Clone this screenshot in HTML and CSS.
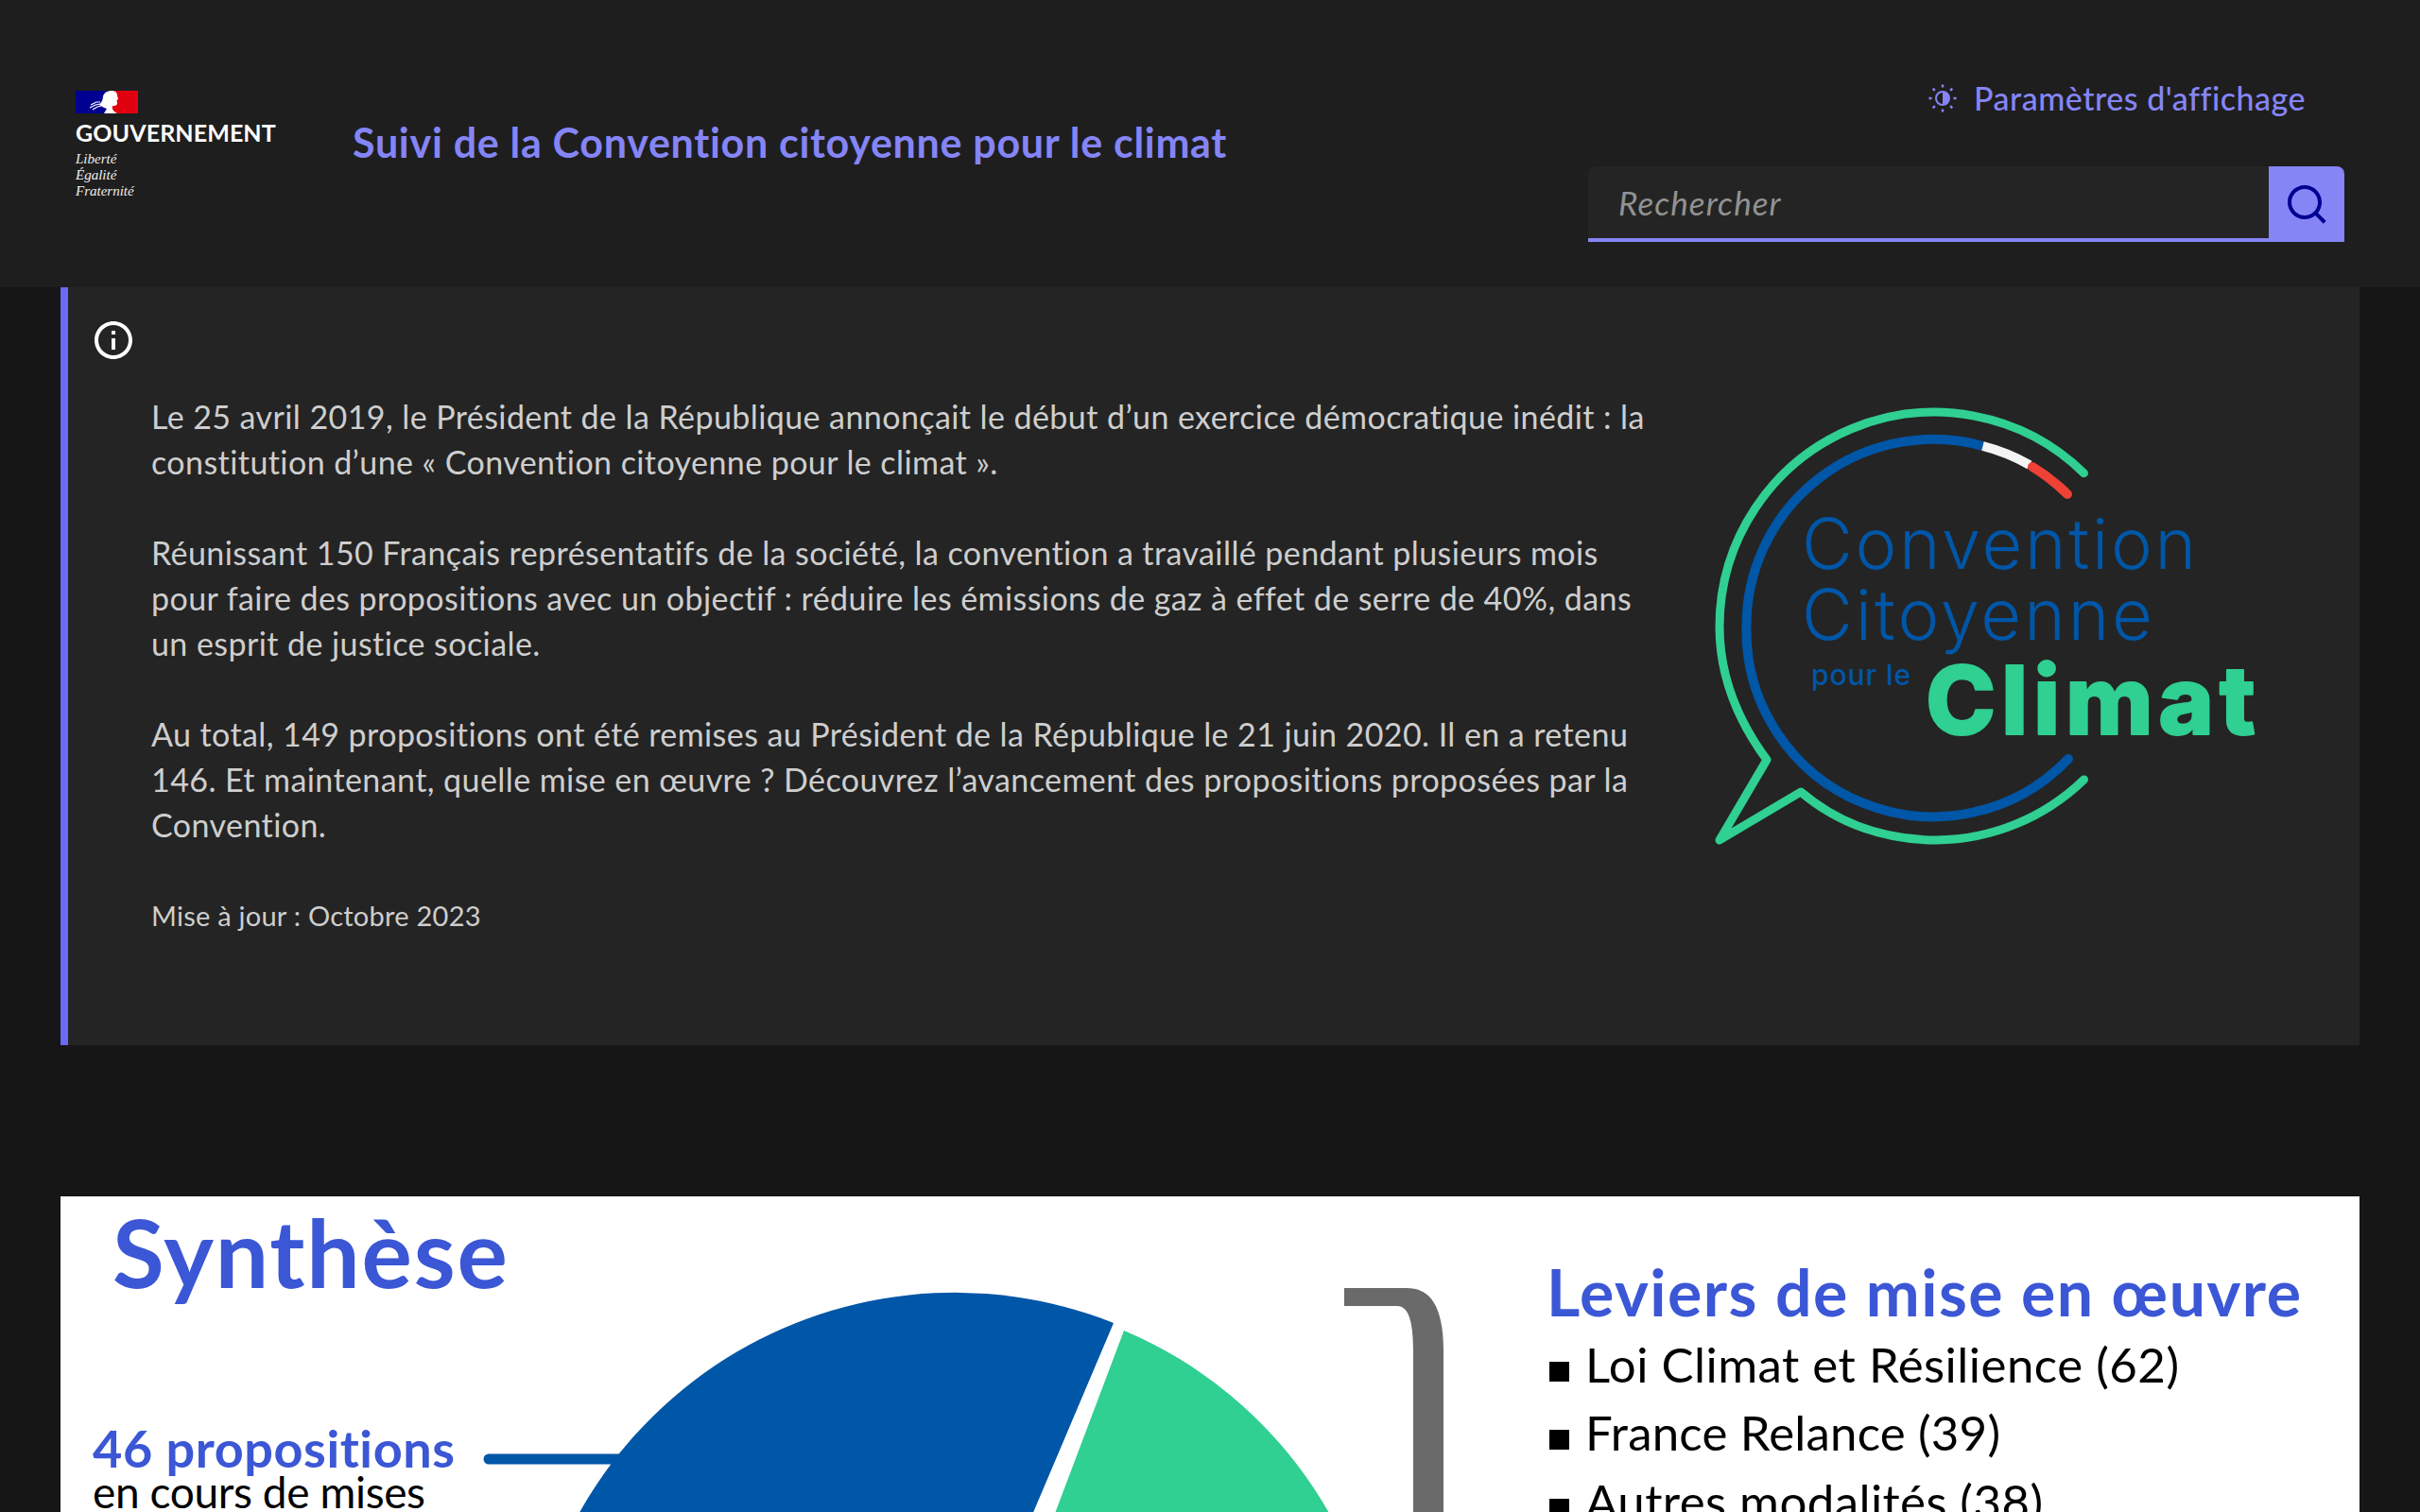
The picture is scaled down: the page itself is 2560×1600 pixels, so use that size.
FILE: index.html
```html
<!DOCTYPE html>
<html lang="fr">
<head>
<meta charset="utf-8">
<title>Suivi de la Convention citoyenne pour le climat</title>
<link rel="stylesheet" href="styles.css">
</head>
<body>
<header class="header">
  <div class="brand">
    <svg class="flag" viewBox="0 0 66 24" width="66" height="24" aria-hidden="true">
      <rect width="36" height="24" fill="#000091"/>
      <rect x="36" width="30" height="24" fill="#e1000f"/>
      <path d="M30 24L33 19C30 18 28 17 25 15C28 12 29 8 29 6C30 2 34 0 38 0C42 0 44 2 44 5L45 9 43.500 10 44 13C44 16 41 16 39 16C38 19 40 22 44 24Z" fill="#fff"/>
      <path d="M15 18L21 15 26 14M16 15L22 12 26 12M18 20L23 17 27 16" stroke="#fff" stroke-width="1.100" fill="none"/>
    </svg>
    <p class="brand-name">GOUVERNEMENT</p>
    <p class="brand-motto">Liberté<br>Égalité<br>Fraternité</p>
  </div>
  <p class="service-title">Suivi de la Convention citoyenne pour le climat</p>
  <div class="tools">
    <a class="settings">
      <svg class="sun" viewBox="0 0 30 30" width="30" height="30" aria-hidden="true">
        <circle cx="15" cy="15" r="7" fill="none" stroke="#8585f6" stroke-width="2"/>
        <path d="M15 8a7 7 0 0 1 0 14z" fill="#8585f6"/>
        <path d="M15 .5v3M15 26.500v3M.5 15h3M26.500 15h3M4.700 4.700l2.200 2.200M23.100 23.100l2.200 2.200M4.700 25.300l2.200-2.200M23.100 6.900l2.200-2.200" stroke="#8585f6" stroke-width="2.400" fill="none"/>
      </svg>
      Paramètres d'affichage
    </a>
    <form class="search">
      <input class="search-input" type="text" placeholder="Rechercher">
      <button class="search-btn" type="button" aria-label="Rechercher">
        <svg viewBox="0 0 24 24" width="48" height="48"><path fill="#000091" d="M18.031 16.617l4.283 4.282-1.415 1.415-4.282-4.283A8.960 8.960 0 0 1 11 20c-4.968 0-9-4.032-9-9s4.032-9 9-9 9 4.032 9 9a8.960 8.960 0 0 1-1.969 5.617zm-2.006-.742A6.977 6.977 0 0 0 18 11c0-3.868-3.133-7-7-7-3.868 0-7 3.132-7 7 0 3.867 3.132 7 7 7a6.977 6.977 0 0 0 4.875-1.975l.15-.15z"/></svg>
      </button>
    </form>
  </div>
</header>
<main class="main">
  <section class="notice">
    <svg class="info" viewBox="0 0 24 24" width="48" height="48" aria-hidden="true"><path fill="#fff" d="M12 22C6.477 22 2 17.523 2 12S6.477 2 12 2s10 4.477 10 10-4.477 10-10 10zm0-2a8 8 0 1 0 0-16 8 8 0 0 0 0 16zM11 7h2v2h-2V7zm0 4h2v6h-2v-6z"/></svg>
    <div class="notice-body">
      <div class="notice-text">
        <p>Le 25 avril 2019, le Président de la République annonçait le début d’un exercice démocratique inédit : la constitution d’une « Convention citoyenne pour le climat ».</p>
        <p>Réunissant 150 Français représentatifs de la société, la convention a travaillé pendant plusieurs mois pour faire des propositions avec un objectif : réduire les émissions de gaz à effet de serre de 40%, dans un esprit de justice sociale.</p>
        <p>Au total, 149 propositions ont été remises au Président de la République le 21 juin 2020. Il en a retenu 146. Et maintenant, quelle mise en œuvre ? Découvrez l’avancement des propositions proposées par la Convention.</p>
        <p class="updated">Mise à jour : Octobre 2023</p>
      </div>
      <svg class="logo" viewBox="1810 428 580 466" width="580" height="466" role="img" aria-label="Convention Citoyenne pour le Climat">
        <g fill="none" stroke-linecap="round" stroke-linejoin="round" stroke-width="9">
          <path stroke="#30cf92" d="M2204.500 500.700A227 227 0 0 0 1819 663C1819 715 1838 762 1869 804L1819 889 1905 838C1945 872 1995 889 2049 889A227 227 0 0 0 2204.500 825"/>
          <path stroke="#0056a7" stroke-width="10" d="M2097.500 472A197.500 197.500 0 0 0 1847.500 663A197.500 197.500 0 0 0 2188 803"/>
          <path stroke="#f4f4f4" stroke-width="10" stroke-linecap="butt" d="M2097.500 472A197.500 197.500 0 0 1 2147 492"/>
          <path stroke="#ef4136" stroke-width="10" d="M2150 494A197.500 197.500 0 0 1 2187 523"/>
        </g>
        <text class="logo-thin" x="1906" y="602" textLength="417">Convention</text>
        <text class="logo-thin" x="1906" y="677" textLength="371">Citoyenne</text>
        <text class="logo-pour" x="1916" y="725" textLength="105">pour le</text>
        <text class="logo-climat" x="2037" y="777" textLength="349">Climat</text>
      </svg>
    </div>
  </section>
  <figure class="synthesis">
    <svg class="synthesis-art" viewBox="64 1266 2432 600" width="2432" height="600" role="img" aria-label="Synthèse">
      <text class="s-title" x="119" y="1363" textLength="418">Synthèse</text>
      <path d="M1000 1820L1178 1400A455 455 0 0 0 555 1820Z" fill="#0056a7"/>
      <path d="M1032 1824L1189 1408A452 452 0 0 1 1465 1824Z" fill="#30cf92"/>
      <path d="M517 1544H660" stroke="#0056a7" stroke-width="11" stroke-linecap="round"/>
      <text class="s-count" x="98" y="1553" textLength="383">46 propositions</text>
      <text class="s-label" x="98" y="1596" textLength="352">en cours de mises</text>
      <path d="M1422 1363H1488C1515 1363 1527 1385 1527 1430V1700H1495V1430C1495 1398 1490 1382 1478 1382H1422Z" fill="#6a6a6a"/>
      <text class="s-lever" x="1636" y="1393" textLength="798">Leviers de mise en œuvre</text>
      <rect x="1639" y="1441" width="21" height="21"/>
      <text class="s-item" x="1677" y="1463" textLength="628">Loi Climat et Résilience (62)</text>
      <rect x="1639" y="1513" width="21" height="21"/>
      <text class="s-item" x="1677" y="1535" textLength="439">France Relance (39)</text>
      <rect x="1639" y="1586" width="21" height="21"/>
      <text class="s-item" x="1677" y="1608" textLength="484">Autres modalités (38)</text>
    </svg>
  </figure>
</main>
</body>
</html>
```
FILE: styles.css
```css
html, body { margin: 0; height: 1600px; overflow: hidden; }
body { background: #161616; font-family: "Lato", "Liberation Sans", sans-serif; color: #cecece; font-variant-ligatures: none; }
p { margin: 0; }

.header {
  height: 304px;
  box-sizing: border-box;
  background: #1e1e1e;
  display: flex;
  align-items: center;
  padding: 0 80px;
}
.brand { width: 293px; display: flex; flex-direction: column; align-items: flex-start; margin-top: 2px; }
.flag { display: block; }
.brand-name { color: #fff; font-weight: 700; font-size: 25px; line-height: 28px; margin-top: 6px; letter-spacing: 0.1px; }
.brand-motto { font-family: "Liberation Serif", serif; font-style: italic; color: #eee; font-size: 15px; line-height: 17px; margin-top: 6px; }
.service-title { color: #8585f6; font-weight: 700; font-size: 43px; letter-spacing: 0.7px; line-height: 56px; margin-top: -2px; }
.tools { margin-left: auto; width: 800px; display: flex; flex-direction: column; align-items: flex-end; margin-top: 32px; }
.settings { display: flex; align-items: center; gap: 18px; color: #8585f6; font-weight: 500; font-size: 34px; letter-spacing: 0.5px; line-height: 48px; margin-right: 41px; margin-bottom: 48px; }
.sun { display: block; }
.search { display: flex; width: 800px; height: 80px; }
.search-input {
  flex: 1; min-width: 0; box-sizing: border-box; height: 80px; border: 0; border-bottom: 4px solid #8585f6;
  background: #242424; padding: 0 32px; font: italic 35px "Lato", sans-serif; letter-spacing: 1.1px; color: #cecece; border-radius: 8px 0 0 0; outline: 0;
}
.search-input::placeholder { color: #929292; opacity: 1; }
.search-btn { width: 80px; height: 80px; border: 0; padding: 16px; background: #8585f6; border-radius: 0 8px 0 0; display: flex; }

.main { padding: 0 64px; }
.notice {
  box-sizing: border-box; height: 802px; background: #242424; border-left: 8px solid #6a6af4; position: relative; padding: 113px 0 0 88px;
}
.info { position: absolute; left: 24px; top: 32px; }
.notice-body { display: flex; align-items: flex-start; }
.notice-text { width: 1600px; flex: none; font-size: 34px; letter-spacing: 0.42px; line-height: 48px; }
.notice-text p + p { margin-top: 48px; }
.notice-text .updated { font-size: 29px; letter-spacing: 0.25px; line-height: 48px; margin-top: 48px; }
.logo { display: block; flex: none; margin: 11px 0 0 50px; }
.logo-thin { font: 300 74px "Inter", sans-serif; fill: #0056a7; }
.logo-pour { font: 500 30px "Inter", sans-serif; fill: #0056a7; }
.logo-climat { font: 800 100px "Inter", sans-serif; fill: #30cf92; stroke: #30cf92; stroke-width: 2px; stroke-linejoin: round; }

.synthesis { margin: 160px 0 0; background: #fff; height: 600px; }
.synthesis-art { display: block; }
.s-title { font: 700 100px "Lato", sans-serif; font-variant-ligatures: none; fill: #3b57d6; }
.s-count { font: 700 54px "Lato", sans-serif; font-variant-ligatures: none; fill: #3b57d6; }
.s-label { font: 400 46px "Lato", sans-serif; font-variant-ligatures: none; fill: #000; }
.s-lever { font: 700 68px "Lato", sans-serif; font-variant-ligatures: none; fill: #3b57d6; }
.s-item { font: 400 51px "Lato", sans-serif; font-variant-ligatures: none; fill: #000; }
```
